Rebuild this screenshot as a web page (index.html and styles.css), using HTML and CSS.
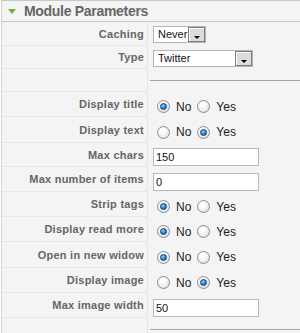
FILE: index.html
```html
<!DOCTYPE html>
<html lang="en">
<head>
  <meta charset="UTF-8" />
  <title>Module Parameters</title>
  <link rel="stylesheet" href="styles.css">
</head>
<body>
  <div class="panel">
    <h3 class="panel-title"><span class="toggler"></span>Module Parameters</h3>

    <div class="paramlist">
      <div class="row row-select h24">
        <div class="key">Caching</div>
        <div class="value">
          <div class="select select-short"><span class="select-text">Never</span><span class="select-btn"><i></i></span></div>
        </div>
      </div>
      <div class="row row-select h23">
        <div class="key">Type</div>
        <div class="value">
          <div class="select select-long"><span class="select-text">Twitter</span><span class="select-btn"><i></i></span></div>
        </div>
      </div>
      <div class="row spacer h23">
        <div class="key"></div>
        <div class="value"><div class="rule"></div></div>
      </div>

      <div class="row h25">
        <div class="key">Display title</div>
        <div class="value radios">
          <span class="radio checked"></span><span class="opt">No</span>
          <span class="radio"></span><span class="opt">Yes</span>
        </div>
      </div>
      <div class="row h26">
        <div class="key">Display text</div>
        <div class="value radios">
          <span class="radio"></span><span class="opt">No</span>
          <span class="radio checked"></span><span class="opt">Yes</span>
        </div>
      </div>
      <div class="row h24">
        <div class="key">Max chars</div>
        <div class="value"><input class="text" type="text" value="150"></div>
      </div>
      <div class="row h25">
        <div class="key">Max number of items</div>
        <div class="value"><input class="text" type="text" value="0"></div>
      </div>
      <div class="row h25">
        <div class="key">Strip tags</div>
        <div class="value radios">
          <span class="radio checked"></span><span class="opt">No</span>
          <span class="radio"></span><span class="opt">Yes</span>
        </div>
      </div>
      <div class="row h25">
        <div class="key">Display read more</div>
        <div class="value radios">
          <span class="radio checked"></span><span class="opt">No</span>
          <span class="radio"></span><span class="opt">Yes</span>
        </div>
      </div>
      <div class="row h26">
        <div class="key">Open in new widow</div>
        <div class="value radios">
          <span class="radio checked"></span><span class="opt">No</span>
          <span class="radio"></span><span class="opt">Yes</span>
        </div>
      </div>
      <div class="row h25">
        <div class="key">Display image</div>
        <div class="value radios">
          <span class="radio"></span><span class="opt">No</span>
          <span class="radio checked"></span><span class="opt">Yes</span>
        </div>
      </div>
      <div class="row h25">
        <div class="key">Max image width</div>
        <div class="value"><input class="text" type="text" value="50"></div>
      </div>
      <div class="row spacer h23">
        <div class="key"></div>
        <div class="value"><div class="rule"></div></div>
      </div>
    </div>
  </div>
</body>
</html>
```

FILE: styles.css
```css
body {
  margin: 0;
  background: #fff;
  font-family: "Liberation Sans", Arial, sans-serif;
  overflow: hidden;
}

.panel {
  margin-left: 1px;
  border-top: 1px solid #c8c8c8;
  border-left: 1px solid #d4d4d4;
  background: #f4f4f4;
  min-height: 340px;
}

.panel-title {
  margin: 0;
  height: 20px;
  display: flex;
  align-items: center;
  padding-left: 6px;
  border-bottom: 1px solid #c8c8c8;
  font-size: 14px;
  font-weight: bold;
  letter-spacing: -0.3px;
  color: #666;
}

.toggler {
  width: 0;
  height: 0;
  border-left: 4px solid transparent;
  border-right: 4px solid transparent;
  border-top: 5px solid #7aae45;
  margin-right: 8px;
}

.row {
  display: grid;
  grid-template-columns: 146px 1fr;
}

.h23 { height: 23px; }
.h24 { height: 24px; }
.h25 { height: 25px; }
.h26 { height: 26px; }

.key {
  display: flex;
  align-items: center;
  justify-content: flex-end;
  padding-right: 3px;
  border-bottom: 1px solid #e6e6e6;
  border-right: 1px solid #e6e6e6;
  font-size: 11px;
  font-weight: bold;
  letter-spacing: 0.25px;
  color: #666;
}

.value {
  display: flex;
  align-items: center;
  padding-left: 5px;
  padding-top: 4px;
}

.row-select .value {
  padding-top: 1px;
}

/* fake windows-style select */
.select {
  display: flex;
  height: 17px;
  box-sizing: border-box;
  border: 1px solid #b4b4b4;
  background: #fff;
}

.select-short { width: 53px; }
.select-long { width: 100px; }

.select-text {
  flex: 1;
  padding-left: 4px;
  font-size: 11px;
  line-height: 15px;
  color: #111;
}

.select-btn {
  width: 17px;
  box-sizing: border-box;
  border: 1px solid #7c7c7c;
  box-shadow: inset 1px 1px #fff;
  background: #dcdcdc;
  display: flex;
  justify-content: center;
  padding-top: 8px;
}

.select-btn i {
  width: 0;
  height: 0;
  border-left: 3px solid transparent;
  border-right: 3px solid transparent;
  border-top: 3px solid #000;
}

.text {
  width: 106px;
  height: 18px;
  box-sizing: border-box;
  margin: 0;
  padding: 0 2px;
  border: 1px solid #b9b9b9;
  background: #fff;
  font-family: "Liberation Sans", Arial, sans-serif;
  font-size: 11px;
  color: #111;
  outline: none;
}

.radios {
  padding-left: 9px;
}

.radio {
  position: relative;
  width: 13px;
  height: 13px;
  box-sizing: border-box;
  border-radius: 50%;
  border: 1px solid #8c8c8c;
  background: radial-gradient(circle at 40% 35%, #fff 20%, #d6d6d6 100%);
  margin-right: 6px;
}

.radio.checked::after {
  content: "";
  position: absolute;
  left: 2px;
  top: 2px;
  width: 7px;
  height: 7px;
  box-sizing: border-box;
  border-radius: 50%;
  border: 1px solid #0d3f72;
  background: radial-gradient(circle at 40% 35%, #9fdcff 0%, #2b8fd8 45%, #0c5a9c 100%);
}

.opt {
  font-size: 12px;
  color: #222;
  margin-right: 6px;
}

.spacer .value {
  align-items: flex-start;
  padding: 11px 0 0 2px;
}

.rule {
  width: 100%;
  border-top: 1px solid #a4a4a4;
}
```
